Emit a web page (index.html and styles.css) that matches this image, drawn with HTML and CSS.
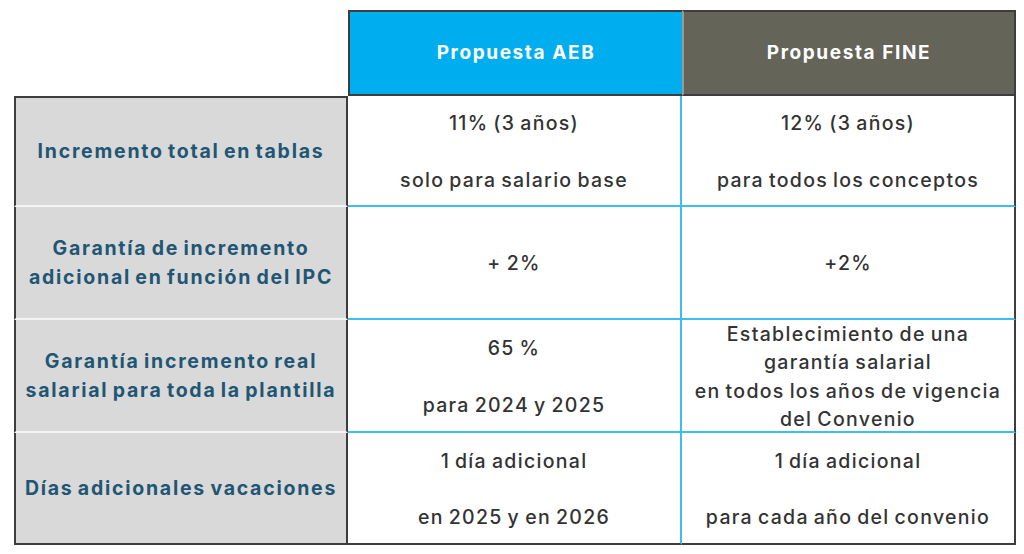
FILE: index.html
```html
<!DOCTYPE html>
<html lang="es">
<head>
<meta charset="utf-8">
<title>Propuestas</title>
<link rel="stylesheet" href="styles.css">
</head>
<body>
<div class="table">
  <div class="corner"></div>
  <div class="head aeb">Propuesta AEB</div>
  <div class="head fine">Propuesta FINE</div>

  <div class="label first">Incremento total en tablas</div>
  <div class="cell a"><p>11% (3 años)</p><p class="gap">solo para salario base</p></div>
  <div class="cell f"><p>12% (3 años)</p><p class="gap">para todos los conceptos</p></div>

  <div class="label">Garantía de incremento<br>adicional en función del IPC</div>
  <div class="cell a"><p>+ 2%</p></div>
  <div class="cell f"><p>+2%</p></div>

  <div class="label">Garantía incremento real<br>salarial para toda la plantilla</div>
  <div class="cell a"><p>65 %</p><p class="gap">para 2024 y 2025</p></div>
  <div class="cell f"><p>Establecimiento de una<br>garantía salarial<br>en todos los años de vigencia<br>del Convenio</p></div>

  <div class="label last">Días adicionales vacaciones</div>
  <div class="cell a last"><p>1 día adicional</p><p class="gap">en 2025 y en 2026</p></div>
  <div class="cell f last"><p>1 día adicional</p><p class="gap">para cada año del convenio</p></div>
</div>
</body>
</html>
```

FILE: styles.css
```css
* { box-sizing: border-box; }
html, body { margin: 0; padding: 0; background: #ffffff; }
body {
  font-family: Inter, "Noto Sans", "Liberation Sans", sans-serif;
  font-size: 19.5px;
  color: #333333;
}
.table {
  display: grid;
  grid-template-columns: 334px 334px 334px;
  grid-template-rows: 86px 111px 113px 113px 112px;
  margin: 10px 0 0 14px;
  width: 1002px;
}
.table p { margin: 0; white-space: nowrap; }
.head {
  display: flex;
  align-items: center;
  justify-content: center;
  color: #ffffff;
  font-weight: 700;
  font-size: 19px;
  letter-spacing: 1.6px;
  border-top: 2px solid #3d3d3d;
  border-bottom: 2px solid #3d3d3d;
  padding-bottom: 2px;
}
.aeb {
  background: #00aeef;
  border-left: 2px solid #3d3d3d;
}
.fine {
  background: #646459;
  border-left: 2px solid #9a9a92;
  border-right: 2px solid #3d3d3d;
}
.label {
  display: flex;
  align-items: center;
  justify-content: center;
  text-align: center;
  background: #d9d9d9;
  color: #1f5673;
  font-weight: 700;
  font-size: 19.5px;
  letter-spacing: 1.75px;
  word-spacing: -2px;
  line-height: 29px;
  white-space: nowrap;
  border-left: 2px solid #3d3d3d;
  border-right: 2px solid #3d3d3d;
  border-bottom: 2px solid #f4f4f4;
}
.label.first { border-top: 2px solid #3d3d3d; }
.label.last { border-bottom: 2px solid #3d3d3d; }
.cell {
  display: flex;
  flex-direction: column;
  align-items: center;
  justify-content: center;
  text-align: center;
  font-weight: 500;
  line-height: 28.5px;
  letter-spacing: 1.3px;
  word-spacing: -1.5px;
  border-bottom: 2px solid #3cbff0;
  padding-top: 2px;
}
.cell .gap { margin-top: 28px; }
.cell.a { border-right: 2px solid #3cbff0; }
.cell.f { border-right: 2px solid #3d3d3d; }
.cell.last { border-bottom: 2px solid #3d3d3d; }
```
